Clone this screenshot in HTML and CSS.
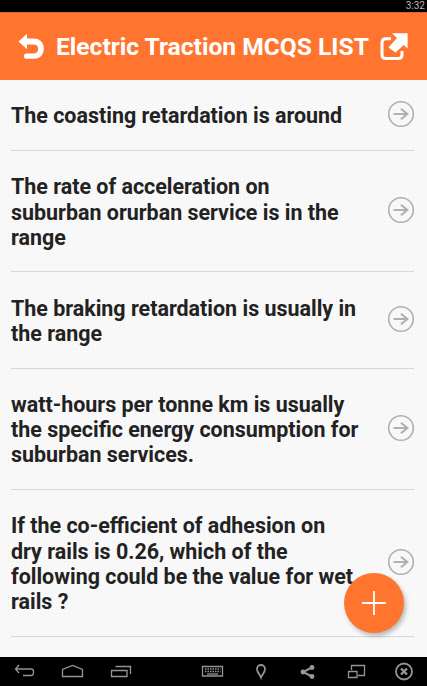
FILE: index.html
```
<!DOCTYPE html>
<html lang="en">
<head>
    <meta charset="UTF-8">
    <meta name="viewport" content="width=device-width, initial-scale=1.0">
    <title>Electric Traction MCQS LIST</title>
    <link rel="stylesheet" href="styles.css">
</head>
<body>
    <!-- shared arrow icon for the list rows -->
    <svg class="defs" width="0" height="0">
        <symbol id="arrow" viewBox="0 0 28 28">
            <circle cx="14" cy="14" r="12.3" stroke-width="1.6"/>
            <path d="M6.5 14H20M14 8.8L20.3 14L14 19.2" stroke-width="2.1"/>
        </symbol>
    </svg>

    <div class="status-bar">3:32</div>

    <header class="header">
        <svg class="back-icon" width="28" height="28" viewBox="0 0 28 28">
            <path d="M0.5 8.5L9 0.8V5.4H15.5C22.5 5.4 25.8 9.8 25.8 15.6C25.8 22 22 25.8 16 25.8H8.5C5 25.8 5 20.4 8.5 20.4H15.3C18.6 20.4 20.2 18.6 20.2 15.9C20.2 13 18.5 11.6 15.3 11.6H9V16.2Z" fill="#fff"/>
        </svg>
        <h1 class="title">Electric Traction MCQS LIST</h1>
        <svg class="share-icon" width="30" height="30" viewBox="0 0 30 30">
            <path d="M11 6.8H6Q2 6.8 2 10.8V22.5Q2 26.5 6 26.5H18Q22 26.5 22 22.5V19" fill="none" stroke="#fff" stroke-width="3"/>
            <path d="M12 1.2H27.6V16.5L23.7 13L15.5 20.5L8.5 15.5L17 6Z" fill="#fff"/>
        </svg>
    </header>

    <!-- question list -->
    <ul class="list">
        <li class="item">
            <span class="question">The coasting retardation is around</span>
            <svg class="arrow"><use href="#arrow"/></svg>
        </li>
        <li class="item">
            <span class="question">The rate of acceleration on<br>suburban orurban service is in the<br>range</span>
            <svg class="arrow"><use href="#arrow"/></svg>
        </li>
        <li class="item">
            <span class="question">The braking retardation is usually in<br>the range</span>
            <svg class="arrow"><use href="#arrow"/></svg>
        </li>
        <li class="item">
            <span class="question">watt-hours per tonne km is usually<br>the specific energy consumption for<br>suburban services.</span>
            <svg class="arrow"><use href="#arrow"/></svg>
        </li>
        <li class="item">
            <span class="question">If the co-efficient of adhesion on<br>dry rails is 0.26, which of the<br>following could be the value for wet<br>rails ?</span>
            <svg class="arrow"><use href="#arrow"/></svg>
        </li>
    </ul>

    <button class="add-button" aria-label="Add">
        <svg width="24" height="24" viewBox="0 0 24 24">
            <path d="M12 0V24M0 12H24" stroke="#fff" stroke-width="1.8"/>
        </svg>
    </button>

    <!-- system navigation -->
    <nav class="nav-bar">
        <div class="nav-group">
            <svg viewBox="0 0 48 30">
                <path d="M19 8L15.5 12L19 16M15.5 12H31Q33.5 12 33.5 14.5V15.5Q33.5 18.5 31 18.5H23"/>
            </svg>
            <svg viewBox="0 0 48 30">
                <path d="M14.5 19.5V12.5L24.5 8.5L34.5 12.5V19.5Z"/>
            </svg>
            <svg viewBox="0 0 48 30">
                <path d="M15.5 13.5H31V19.5H15.5ZM19.5 9.5H34.5V17"/>
            </svg>
        </div>
        <div class="nav-group">
            <svg viewBox="0 0 48 30">
                <path d="M14.5 9.5H34.5V19H14.5Z"/>
                <path d="M17 12H32.5M17 14.5H32.5" stroke-width="1.6" stroke-dasharray="1.5 1"/>
                <path d="M19 17H30"/>
            </svg>
            <svg viewBox="0 0 48 30">
                <path d="M25 20.5C24 17.5 21 15.5 21 12A4 4 0 0 1 29 12C29 15.5 26 17.5 25 20.5Z" stroke-width="1.8"/>
            </svg>
            <svg viewBox="0 0 48 30">
                <path d="M28 10.5L19 15L28 19.5" stroke-width="2"/>
                <g fill="#9a9a9a" stroke="none">
                    <circle cx="28" cy="10.5" r="2.4"/>
                    <circle cx="19" cy="15" r="2.4"/>
                    <circle cx="28" cy="19.5" r="2.4"/>
                </g>
            </svg>
            <svg viewBox="0 0 48 30">
                <path d="M19.5 13V8.5H32.5V18.5H26M16.5 14.5H25V20.5H16.5Z"/>
            </svg>
            <svg viewBox="0 0 48 30">
                <circle cx="24" cy="14.5" r="8" stroke-width="1.8"/>
                <path d="M21 11.5L27 17.5M27 11.5L21 17.5" stroke-width="2.4"/>
            </svg>
        </div>
    </nav>
</body>
</html>
```
FILE: styles.css
```
* {
    box-sizing: border-box;
}

body {
    display: flex;
    flex-direction: column;
    height: 100vh;
    margin: 0;
    overflow: hidden;
    position: relative;
    font-family: Roboto, "Liberation Sans", sans-serif;
    /* faint woven paper */
    background-color: #f9f9f9;
    background-image:
        repeating-linear-gradient(0deg, rgba(0, 0, 0, 0.006) 0 1px, transparent 1px 4px),
        repeating-linear-gradient(90deg, rgba(0, 0, 0, 0.006) 0 1px, transparent 1px 4px);
}

.defs {
    position: absolute;
}

.status-bar {
    flex: none;
    height: 12px;
    padding-right: 2px;
    background-color: #000;
    color: #b8b8b8;
    font-size: 10px;
    line-height: 12px;
    text-align: right;
}

/* orange title bar */
.header {
    flex: none;
    display: flex;
    align-items: center;
    height: 67.9px;
    padding: 1px 17px 0 18px;
    background-color: #ff7530;
    border-top: 1px solid #e0652a;
}

.title {
    flex: 1;
    margin: 0 0 0 10px;
    color: #fff;
    font-size: 24.6px;
    font-weight: 700;
    line-height: 30px;
    white-space: nowrap;
}

.back-icon,
.share-icon {
    flex: none;
}

.list {
    flex: 1;
    min-height: 0;
    margin: 0;
    padding: 0 13px 0 11px;
    list-style: none;
}

.item {
    display: flex;
    justify-content: space-between;
    align-items: center;
    padding: 23.5px 0 21.3px;
    border-bottom: 1px solid #d8d8d8;
}

.question {
    color: #222;
    font-size: 21.45px;
    font-weight: 700;
    line-height: 25.2px;
    white-space: nowrap;
}

.arrow {
    flex: none;
    width: 28px;
    height: 28px;
    margin: -4px -1px -2px 0;
    margin-top: -5px;
    margin-bottom: -1px;
    fill: none;
    stroke: #b0b0b0;
}

/* floating button over the list */
.add-button {
    position: absolute;
    right: 23px;
    bottom: 53px;
    display: flex;
    justify-content: center;
    align-items: center;
    width: 60.5px;
    height: 60.5px;
    padding: 0;
    border: none;
    border-radius: 50%;
    background-color: #ff7530;
    box-shadow: 2px 3px 4px rgba(0, 0, 0, 0.25);
}

.nav-bar {
    flex: none;
    display: flex;
    justify-content: space-between;
    height: 29px;
    background-color: #000;
}

.nav-group {
    display: flex;
}

.nav-group:last-child {
    margin-right: -1px;
}

.nav-group svg {
    width: 48px;
    height: 30px;
    fill: none;
    stroke: #949494;
    stroke-width: 1.3;
}
```
